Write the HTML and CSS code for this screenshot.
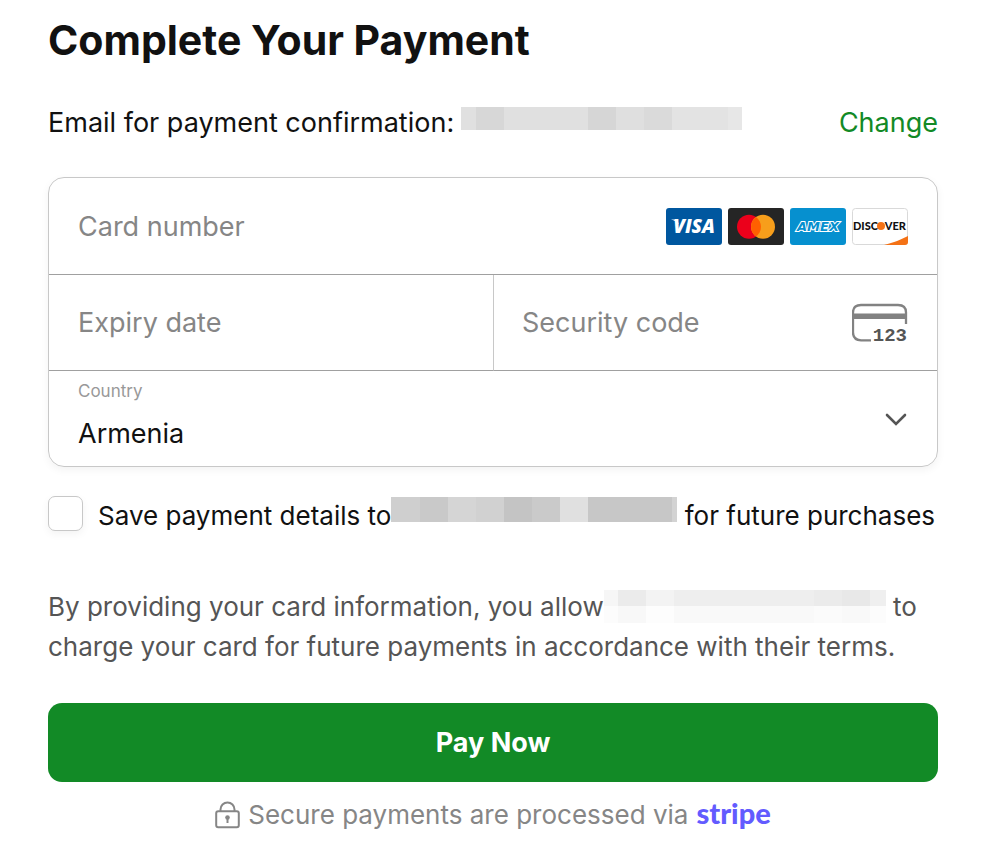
FILE: index.html
```html
<!DOCTYPE html>
<html lang="en">
<head>
<meta charset="utf-8">
<meta name="viewport" content="width=device-width, initial-scale=1">
<title>Complete Your Payment</title>
<link rel="stylesheet" href="styles.css">
</head>
<body>
<main class="checkout">
  <h1 class="title">Complete Your Payment</h1>
  <div class="email-row">
    <p class="email">Email for payment confirmation:<span class="redacted redacted-email"></span></p>
    <a class="change" href="#">Change</a>
  </div>
  <form class="form">
    <div class="card-fields">
      <div class="field field-full">
        <input class="input" type="text" placeholder="Card number" aria-label="Card number">
        <div class="brands">
          <svg class="brand" viewBox="0 0 56 37" role="img" aria-label="Visa">
            <rect width="56" height="37" rx="3" fill="#00579f"/>
            <text class="visa-text" x="28" y="25" text-anchor="middle">VISA</text>
            <path d="M5 11.500h6l2 5q-3-4-8-5z" fill="#fff"/>
          </svg>
          <svg class="brand" viewBox="0 0 56 37" role="img" aria-label="Mastercard">
            <rect width="56" height="37" rx="3" fill="#252525"/>
            <circle cx="21" cy="18.700" r="12" fill="#eb001b"/>
            <circle cx="35" cy="18.700" r="12" fill="#f79e1b"/>
            <path d="M28 9a12 12 0 0 1 0 19.400A12 12 0 0 1 28 9z" fill="#ff5f00"/>
          </svg>
          <svg class="brand" viewBox="0 0 56 37" role="img" aria-label="American Express">
            <rect width="56" height="37" rx="3" fill="#0690cf"/>
            <text class="amex-text" x="28" y="23" text-anchor="middle">AMEX</text>
          </svg>
          <svg class="brand" viewBox="0 0 56 37" role="img" aria-label="Discover">
            <rect x=".5" y=".5" width="55" height="36" rx="3" fill="#fff" stroke="#d9d9d9"/>
            <path d="M32 37C42 34.500 49 31.500 56 28v6a3 3 0 0 1-3 3z" fill="#f47216"/>
            <text class="discover-text" x="1" y="22">DISC</text>
            <text class="discover-text" x="54" y="22" text-anchor="end">VER</text>
            <circle cx="29" cy="18" r="4" fill="#f47216"/>
          </svg>
        </div>
      </div>
      <div class="field">
        <input class="input" type="text" placeholder="Expiry date" aria-label="Expiry date">
      </div>
      <div class="field field-code">
        <input class="input" type="text" placeholder="Security code" aria-label="Security code">
        <svg class="cvc" viewBox="0 0 56 40" aria-hidden="true">
          <path d="M19 37.300H9q-8-.3-8-8V9.500Q1 2 9 2h37q8 0 8 7.500V21" fill="none" stroke="#828282" stroke-width="2.300"/>
          <path d="M1 10.500h53v5.500H1z" fill="#828282"/>
          <text class="cvc-text" x="55" y="38" text-anchor="end">123</text>
        </svg>
      </div>
      <div class="field field-full field-country">
        <label class="country-label" for="country">Country</label>
        <select class="country" id="country"><option>Armenia</option></select>
        <svg class="chevron" viewBox="0 0 22 14" aria-hidden="true"><path d="M2 2l9 9 9-9" fill="none" stroke="#555" stroke-width="2.600" stroke-linecap="round" stroke-linejoin="miter"/></svg>
      </div>
    </div>
    <div class="save">
      <input class="checkbox" type="checkbox" id="save">
      <label class="save-label" for="save">Save payment details to<span class="redacted redacted-save"></span> for future purchases</label>
    </div>
    <p class="terms">By providing your card information, you allow<span class="redacted redacted-terms"></span> to charge your card for future payments in accordance with their terms.</p>
    <button class="pay" type="button">Pay Now</button>
  </form>
  <p class="secure">
    <svg class="lock" viewBox="0 0 25 28" aria-hidden="true">
      <rect x="1.200" y="10.200" width="22.600" height="16" rx="2" fill="none" stroke="#868686" stroke-width="2"/>
      <path d="M5.500 10V8.500a7 7 0 0 1 14 0V10" fill="none" stroke="#868686" stroke-width="2"/>
      <circle cx="12.500" cy="16.500" r="2.300" fill="#868686"/>
      <path d="M12.500 17v5" stroke="#868686" stroke-width="2"/>
    </svg>
    <span>Secure payments are processed via</span>
    <span class="stripe">stripe</span>
  </p>
</main>
</body>
</html>
```
FILE: styles.css
```css
* {
  box-sizing: border-box;
}

body {
  margin: 0;
  background: #fff;
  color: #111;
  font-family: Inter, "Liberation Sans", sans-serif;
  font-size: 27px;
}

p {
  margin: 0;
}

.checkout {
  padding: 16px 44px 24px 48px;
}

.title {
  margin: 0;
  font-size: 41px;
  line-height: 48px;
  font-weight: 700;
}

.email-row {
  display: flex;
  justify-content: space-between;
  margin-top: 43px;
  line-height: 32px;
}

.change {
  color: #128a26;
  text-decoration: none;
}

.redacted {
  display: inline-block;
  vertical-align: top;
}

.redacted-email {
  width: 281px;
  height: 23px;
  margin-left: 7px;
  background: linear-gradient(to right, #e0e0e0 15px, #d7d7d7 15px 43px, #e0e0e0 43px 127px, #d6d6d6 127px 155px, #dfdfdf 155px 183px, #dadada 183px 211px, #e3e3e3 211px 267px, #e7e7e7 267px);
}

.redacted-save {
  width: 286px;
  height: 25px;
  background: linear-gradient(to right, #cfcfcf 29px, #c9c9c9 29px 57px, #d5d5d5 57px 85px, #d1d1d1 85px 113px, #c4c4c4 113px 141px, #cacaca 141px 169px, #e0e0e0 169px 197px, #c7c7c7 197px 281px, #d3d3d3 281px);
}

.redacted-terms {
  width: 282px;
  height: 33px;
  margin-top: 3px;
  background:
    linear-gradient(to right, #f6f6f6 14px, #ebebeb 14px 42px, #f3f3f3 42px 70px, #eee 70px 210px, #ebebeb 210px 238px, #e8e8e8 238px 266px, #efefef 266px) top / 100% 16px no-repeat,
    linear-gradient(to right, #fcfcfc 14px, #f8f8f8 14px 42px, #fdfdfd 42px 70px, #f9f9f9 70px 210px, #fbfbfb 210px 238px, #f9f9f9 238px 266px, #fcfcfc 266px);
}

.card-fields {
  display: grid;
  grid-template-columns: repeat(2, minmax(0, 1fr));
  grid-template-rows: 97px 96px 95px;
  margin-top: 38px;
  border: 1px solid #c8c8c8;
  border-radius: 16px;
  box-shadow: 0 3px 8px rgba(0, 0, 0, 0.05);
}

.field {
  display: flex;
  align-items: center;
  padding: 0 29px;
  border-bottom: 1px solid #a0a0a0;
}

.field-full {
  grid-column: 1 / -1;
}

.field-code {
  padding-left: 28px;
  border-left: 1px solid #c8c8c8;
}

.input {
  flex: 1;
  min-width: 0;
  height: 60px;
  padding: 0;
  border: 0;
  background: transparent;
  color: #111;
  font: inherit;
  outline: 0;
}

.input::placeholder {
  color: #868686;
  opacity: 1;
}

.brands {
  display: flex;
  gap: 6px;
}

.brand {
  width: 56px;
  height: 37px;
}

.visa-text {
  fill: #fff;
  font: italic 800 19px "Open Sans", sans-serif;
}

.amex-text {
  fill: #0690cf;
  stroke: #fff;
  stroke-width: 2px;
  paint-order: stroke;
  font: italic 700 13px "DejaVu Sans", sans-serif;
}

.discover-text {
  fill: #111;
  font: 900 11px Lato, sans-serif;
}

.cvc {
  width: 56px;
  height: 40px;
}

.cvc-text {
  fill: #555;
  font: 700 19px "Liberation Mono", monospace;
}

.field-country {
  position: relative;
  border-bottom: 0;
}

.country-label {
  position: absolute;
  top: 10px;
  left: 29px;
  color: #999;
  font-size: 17px;
  line-height: 20px;
}

.country {
  width: 100%;
  height: 95px;
  padding: 30px 0 0;
  border: 0;
  background: transparent;
  color: #111;
  font: inherit;
  appearance: none;
  outline: 0;
}

.chevron {
  position: absolute;
  top: 42px;
  right: 30px;
  width: 22px;
  height: 14px;
  pointer-events: none;
}

.save {
  display: flex;
  align-items: flex-start;
  gap: 15px;
  margin-top: 29px;
  font-size: 26px;
}

.checkbox {
  flex: none;
  width: 35px;
  height: 35px;
  margin: 0;
  border: 1px solid #c8c8c8;
  border-radius: 7px;
  background: #fff;
  box-shadow: 0 3px 8px rgba(0, 0, 0, 0.05);
  appearance: none;
}

.save-label {
  padding-top: 1px;
  line-height: 38px;
}

.terms {
  margin-top: 52px;
  color: #555;
  font-size: 26px;
  line-height: 40px;
}

.pay {
  display: block;
  width: 100%;
  height: 79px;
  margin-top: 36px;
  border: 0;
  border-radius: 14px;
  background: #128a26;
  color: #fff;
  font: inherit;
  font-weight: 700;
}

.secure {
  display: flex;
  align-items: center;
  justify-content: center;
  gap: 8px;
  margin-top: 17px;
  color: #868686;
  font-size: 26px;
  line-height: 32px;
}

.lock {
  width: 25px;
  height: 28px;
}

.stripe {
  color: #635bff;
  font: 900 29px/28px Lato, sans-serif;
  padding-bottom: 4px;
}
```
